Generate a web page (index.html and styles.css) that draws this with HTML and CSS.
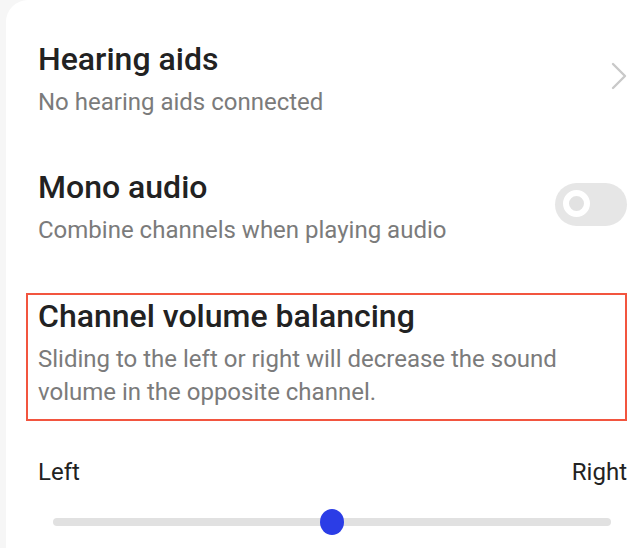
FILE: index.html
```html
<!DOCTYPE html>
<html lang="en">
<head>
<meta charset="utf-8">
<title>Accessibility audio</title>
<link rel="stylesheet" href="styles.css">
</head>
<body>
<div class="card">
  <div class="row">
    <div class="texts">
      <div class="title">Hearing aids</div>
      <div class="sub">No hearing aids connected</div>
    </div>
    <svg class="chevron" width="16" height="28" viewBox="0 0 16 28" aria-hidden="true">
      <path d="M2 2 L14 14 L2 26" fill="none" stroke="#c9c9c9" stroke-width="2.4" stroke-linecap="round" stroke-linejoin="round"/>
    </svg>
  </div>
  <div class="row row-gap">
    <div class="texts">
      <div class="title">Mono audio</div>
      <div class="sub">Combine channels when playing audio</div>
    </div>
    <div class="toggle"><span class="knob"></span></div>
  </div>
  <div class="highlight">
    <div class="title">Channel volume balancing</div>
    <div class="sub">Sliding to the left or right will decrease the sound volume in the opposite channel.</div>
  </div>
  <div class="labels">
    <span>Left</span>
    <span>Right</span>
  </div>
  <div class="slider">
    <div class="track"></div>
    <div class="thumb"></div>
  </div>
</div>
</body>
</html>
```
FILE: styles.css
```css
html, body {
  margin: 0;
  padding: 0;
  background: #f6f6f6;
  font-family: Roboto, "Noto Sans", sans-serif;
}
body {
  width: 642px;
  height: 548px;
  overflow: hidden;
}
.card {
  margin-left: 6px;
  background: #ffffff;
  border-top-left-radius: 22px;
  padding: 39px 15px 0 20px;
  height: 548px;
  box-sizing: border-box;
}
.row {
  display: flex;
  align-items: center;
  justify-content: space-between;
  padding-left: 12px;
}
.row-gap {
  margin-top: 48px;
}
.title {
  font-size: 32px;
  line-height: 40px;
  font-weight: 500;
  color: #222222;
}
.sub {
  margin-top: 7px;
  font-size: 24px;
  line-height: 33px;
  color: #7b7b7b;
}
.chevron {
  display: block;
  margin-top: -6px;
}
.toggle {
  position: relative;
  width: 72px;
  height: 43px;
  border-radius: 22px;
  background: #e6e6e6;
  margin-top: -5px;
}
.knob {
  position: absolute;
  left: 8px;
  top: 7px;
  width: 15px;
  height: 15px;
  border-radius: 50%;
  background: #e2e2e2;
  border: 6px solid #ffffff;
}
.highlight {
  margin-top: 46px;
  border: 2px solid #f2553f;
  padding: 1px 10px 10px 10px;
}
.highlight .sub {
  margin-top: 7px;
  width: 560px;
}
.labels {
  margin-top: 35px;
  padding-left: 12px;
  display: flex;
  justify-content: space-between;
  font-size: 24px;
  line-height: 33px;
  color: #222222;
}
.slider {
  position: relative;
  margin: 20px 16px 0 27px;
  height: 26px;
  display: flex;
  align-items: center;
}
.track {
  flex: 1;
  height: 8px;
  border-radius: 4px;
  background: #e1e1e1;
}
.thumb {
  position: absolute;
  left: 267px;
  top: 0;
  width: 24px;
  height: 26px;
  border-radius: 50%;
  background: #2b3de6;
}
```
